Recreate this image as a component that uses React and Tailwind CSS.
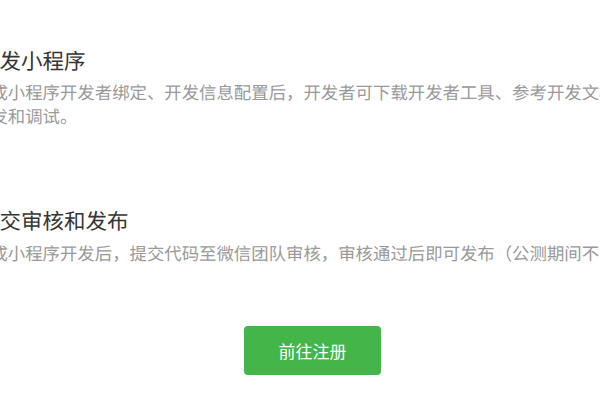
export default function App() {
  const font = { fontFamily: '"Noto Sans CJK SC", "Noto Sans", sans-serif' };
  return (
    <div
      className="w-[600px] h-[400px] bg-white overflow-hidden [text-rendering:geometricPrecision]"
      style={font}
    >
      <div className="pt-[46px]">
        {/* 开发小程序 */}
        <div className="w-[800px]">
          <h2 className="ml-[-22px] text-[21.5px] leading-[30px] text-[#353535] font-normal whitespace-nowrap">
            开发小程序
          </h2>
          <p className="ml-[-27px] mt-[5px] w-[760px] text-[17.4px] leading-[24px] text-[#9a9a9a]">
            完成小程序开发者绑定、开发信息配置后，开发者可下载开发者工具、参考开发文档进行小程序的开发和调试。
          </p>
        </div>

        {/* 提交审核和发布 */}
        <div className="w-[800px] mt-[77px]">
          <h2 className="ml-[-22px] text-[21.5px] leading-[30px] text-[#353535] font-normal whitespace-nowrap">
            提交审核和发布
          </h2>
          <p className="ml-[-27px] mt-[6px] w-[760px] text-[17.4px] leading-[24px] text-[#9a9a9a]">
            完成小程序开发后，提交代码至微信团队审核，审核通过后即可发布（公测期间不能发布）。
          </p>
        </div>

        <div className="mt-[60px] pl-[244px]">
          <button className="w-[137px] h-[49px] rounded-[4px] bg-[#44b549] text-white text-[17px]">
            前往注册
          </button>
        </div>
      </div>
    </div>
  );
}
